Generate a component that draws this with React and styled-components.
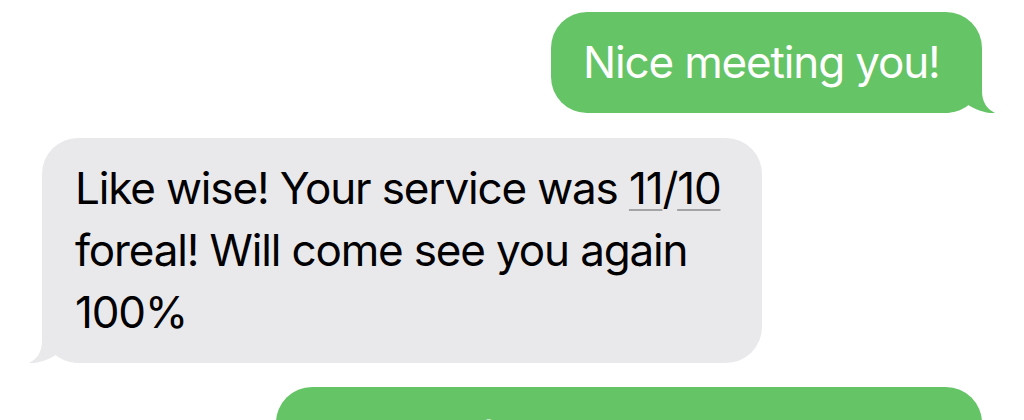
import React from "react";
import styled, { createGlobalStyle } from "styled-components";

const Global = createGlobalStyle`
  html, body {
    margin: 0;
    padding: 0;
    background: #ffffff;
    overflow: hidden;
  }
  body {
    font-family: Inter, "Noto Sans", "Liberation Sans", sans-serif;
    -webkit-font-smoothing: antialiased;
  }
`;

const Thread = styled.div`
  display: flex;
  flex-direction: column;
  gap: 24px;
  padding: 12px 42px 0;
  height: 420px;
  box-sizing: border-box;
  overflow: hidden;
`;

const Row = styled.div`
  display: flex;
  justify-content: ${(p) => (p.$sent ? "flex-end" : "flex-start")};
  margin-top: ${(p) => p.$extra || 0}px;
`;

const Bubble = styled.div`
  position: relative;
  box-sizing: border-box;
  width: ${(p) => p.$width}px;
  padding: 19px 20px 20px ${(p) => (p.$sent ? 32 : 33)}px;
  border-radius: 36px;
  background: ${(p) => (p.$sent ? "#65c466" : "#e9e9eb")};
  color: ${(p) => (p.$sent ? "#ffffff" : "#000000")};
  font-size: 44px;
  line-height: 62px;
  font-weight: 400;
  letter-spacing: -1.15px;
`;

const Tail = styled.svg`
  position: absolute;
  bottom: -1px;
  width: 50px;
  height: 38px;
  ${(p) =>
    p.$sent
      ? "right: -14px;"
      : "left: -14px; transform: scaleX(-1);"}
`;

const Detected = styled.span`
  text-decoration: underline;
  text-decoration-color: #a4a4a6;
  text-decoration-thickness: 2px;
  text-underline-offset: 5px;
`;

function BubbleTail({ sent, color }) {
  return (
    <Tail $sent={sent} viewBox="0 0 50 38" aria-hidden="true">
      <path
        d="M36 0 L36 15 C36 26 41 33 49 37 C40 37.5 29 34 19 27 C13 33 6 37 0 37 L0 0 Z"
        fill={color}
      />
    </Tail>
  );
}

export default function App() {
  return (
    <>
      <Global />
      <Thread>
        <Row $sent>
          <Bubble $sent $width={431}>
            Nice meeting you!
            <BubbleTail sent color="#65c466" />
          </Bubble>
        </Row>
        <Row $extra={1}>
          <Bubble $width={720}>
            Like wise! Your service was <Detected>11</Detected>/<Detected>10</Detected> foreal! Will come see you again 100%
            <BubbleTail color="#e9e9eb" />
          </Bubble>
        </Row>
        <Row $sent>
          <Bubble $sent $width={706}>
            Looking forward to it, take care!
          </Bubble>
        </Row>
      </Thread>
    </>
  );
}
